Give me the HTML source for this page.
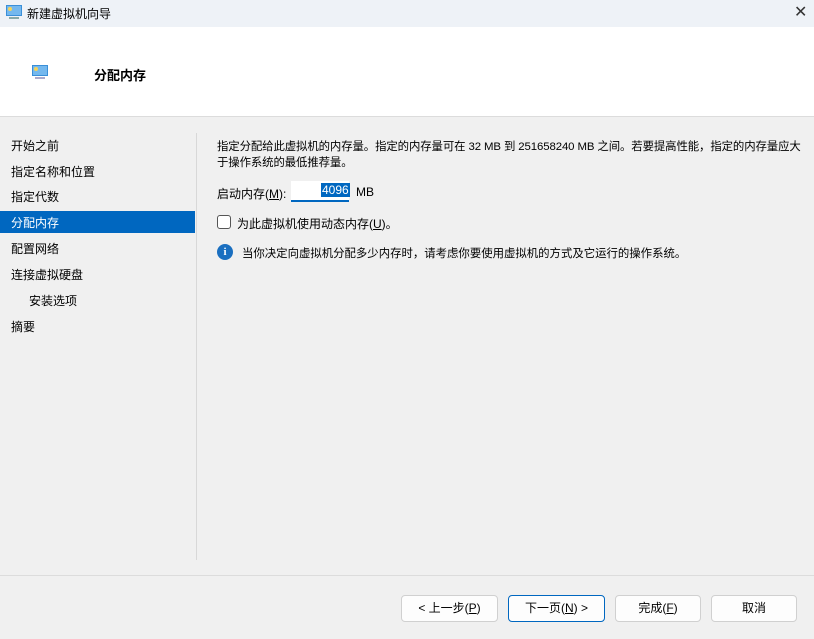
<!DOCTYPE html>
<html><head><meta charset="utf-8"><style>
*{margin:0;padding:0;box-sizing:border-box}
body{width:814px;height:639px;background:#f0f0f0;font-family:"Liberation Sans","Noto Sans CJK SC",sans-serif;font-size:12px;color:#000;position:relative;overflow:hidden}
.a{position:absolute;white-space:nowrap}
.tb{left:0;top:0;width:814px;height:27px;background:#eef2f7}
.hd{left:0;top:27px;width:814px;height:90px;background:#fff;border-bottom:1px solid #dcdcdc}
.nav{left:11px;font-size:12px}
.btn{position:absolute;top:595px;height:27px;background:#fdfdfd;border:1px solid #d0d0d0;border-radius:4px;text-align:center;line-height:25px;font-size:12px}
u{text-decoration:underline}
</style></head><body>
<div class="a tb"></div>
<svg class="a" style="left:5px;top:4px" width="18" height="16"><rect x="1" y="1" width="16" height="11" fill="#3a8fd8"/><rect x="2" y="2" width="14" height="9" fill="#74b8ee"/><circle cx="5" cy="5" r="2" fill="#f5d35a"/><rect x="4" y="13" width="10" height="2" fill="#8aa"/></svg>
<div class="a" style="left:27px;top:5px;font-size:12px">新建虚拟机向导</div>
<div class="a" style="left:794px;top:2px;font-size:16px;color:#333">✕</div>
<div class="a hd"></div>
<svg class="a" style="left:31px;top:64px" width="18" height="16"><rect x="1" y="1" width="16" height="11" fill="#3a8fd8"/><rect x="2" y="2" width="14" height="9" fill="#74b8ee"/><circle cx="5" cy="5" r="2" fill="#f5d35a"/><rect x="4" y="13" width="10" height="2" fill="#aac"/></svg>
<div class="a" style="left:94px;top:65px;font-size:13px;font-weight:bold">分配内存</div>
<div class="a nav" style="top:137px">开始之前</div>
<div class="a nav" style="top:163px">指定名称和位置</div>
<div class="a nav" style="top:188px">指定代数</div>
<div class="a" style="left:0;top:211px;width:195px;height:22px;background:#0067c0"></div>
<div class="a nav" style="top:214px;color:#fff">分配内存</div>
<div class="a nav" style="top:240px">配置网络</div>
<div class="a nav" style="top:266px">连接虚拟硬盘</div>
<div class="a nav" style="top:292px;left:29px">安装选项</div>
<div class="a nav" style="top:318px">摘要</div>
<div class="a" style="left:196px;top:133px;width:1px;height:427px;background:#d8d8d8"></div>
<div class="a" style="left:217px;top:139px;line-height:16px;font-size:11.4px;letter-spacing:-0.1px">指定分配给此虚拟机的内存量。指定的内存量可在 32 MB 到 251658240 MB 之间。若要提高性能，指定的内存量应大<br>于操作系统的最低推荐量。</div>
<div class="a" style="left:217px;top:185px">启动内存(<u>M</u>):</div>
<div class="a" style="left:291px;top:181px;width:58px;height:21px;background:#fff;border-bottom:2px solid #0067c0"></div>
<div class="a" style="left:321px;top:183px;background:#0067c0;color:#fff;padding:0 1px">4096</div>
<div class="a" style="left:356px;top:185px">MB</div>
<div class="a" style="left:217px;top:215px;width:14px;height:14px;border:1px solid #555;border-radius:3px;background:#fff"></div>
<div class="a" style="left:237px;top:215px">为此虚拟机使用动态内存(<u>U</u>)。</div>
<div class="a" style="left:217px;top:244px;width:16px;height:16px;border-radius:50%;background:#1a6fc0;color:#fff;font-weight:bold;font-size:11px;text-align:center;line-height:16px;font-family:'Liberation Serif',serif">i</div>
<div class="a" style="left:242px;top:245px;font-size:11.4px">当你决定向虚拟机分配多少内存时，请考虑你要使用虚拟机的方式及它运行的操作系统。</div>
<div class="a" style="left:0;top:575px;width:814px;height:1px;background:#dcdcdc"></div>
<div class="btn" style="left:401px;width:97px">&lt; 上一步(<u>P</u>)</div>
<div class="btn" style="left:508px;width:97px;border-color:#0067c0">下一页(<u>N</u>) &gt;</div>
<div class="btn" style="left:615px;width:86px">完成(<u>F</u>)</div>
<div class="btn" style="left:711px;width:86px">取消</div>
</body></html>
